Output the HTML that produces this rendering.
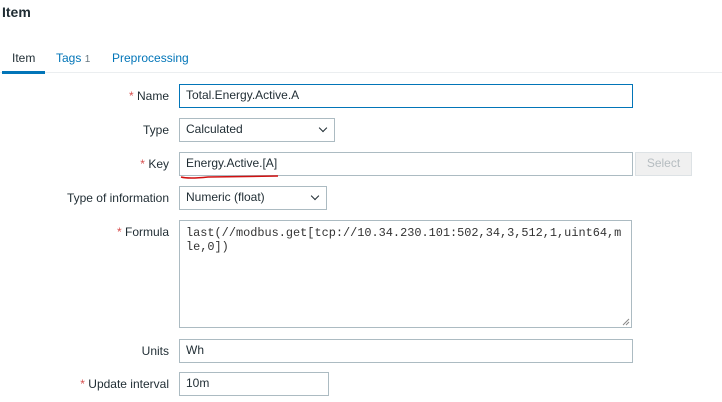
<!DOCTYPE html>
<html><head><meta charset="utf-8"><style>
body{margin:0;width:722px;height:402px;background:#fff;font-family:"Liberation Sans",Arial,sans-serif;font-size:12px;color:#1f2c33;position:relative;overflow:hidden}
.a{position:absolute}
.lbl{position:absolute;right:553px;text-align:right;white-space:nowrap;font-size:12px}
.req::before{content:"* ";color:#d64e4e}
.in{position:absolute;box-sizing:border-box;border:1px solid #acbbc2;background:#fff;padding:0 6px;line-height:21px;font-size:12px;white-space:nowrap}
.sel::after{content:"";position:absolute;right:8px;top:6px;width:5px;height:5px;border-right:1.5px solid #1f2c33;border-bottom:1.5px solid #1f2c33;transform:rotate(45deg)}
</style></head><body>
<div class="a" style="left:2px;top:4px;font-size:14px;font-weight:bold;color:#1f2c33">Item</div>
<div class="a" style="left:0;top:72px;width:722px;height:1px;background:#ebeef0"></div>
<div class="a" style="left:12px;top:51px;">Item</div>
<div class="a" style="left:2px;top:71px;width:43px;height:3px;background:#0275b8"></div>
<div class="a" style="left:56px;top:51px;color:#0275b8">Tags <span style="font-size:10px;color:#687780">1</span></div>
<div class="a" style="left:112px;top:51px;color:#0275b8">Preprocessing</div>

<div class="lbl req" style="top:89px">Name</div>
<div class="in" style="left:179px;top:84px;width:454px;height:24px;border-color:#0275b8">Total.Energy.Active.A</div>
<div class="lbl" style="top:123px">Type</div>
<div class="in sel" style="left:179px;top:118px;width:156px;height:24px">Calculated</div>
<div class="lbl req" style="top:157px">Key</div>
<div class="in" style="left:179px;top:152px;width:454px;height:24px">Energy.Active.[A]</div>
<svg class="a" style="left:178px;top:172px" width="104" height="8"><path d="M3 5 Q10 7 30 5 L100 4" stroke="#d01010" stroke-width="1.5" fill="none"/></svg>
<div class="in" style="left:635px;top:152px;width:57px;height:24px;background:#f0f0f0;border-color:#dde2e5;color:#b5bcc0;text-align:center;padding:0">Select</div>
<div class="lbl" style="top:191px">Type of information</div>
<div class="in sel" style="left:179px;top:186px;width:148px;height:24px">Numeric (float)</div>
<div class="lbl req" style="top:225px">Formula</div>
<div class="in" style="left:179px;top:220px;width:453px;height:108px;font-family:'Liberation Mono',monospace;font-size:11.9px;line-height:14px;padding:5px 6px;white-space:pre;color:#333">last(//modbus.get[tcp://10.34.230.101:502,34,3,512,1,uint64,m
le,0])</div>
<svg class="a" style="left:622px;top:318px" width="8" height="8"><path d="M1 7L7 1M4 7L7 4" stroke="#888" stroke-width="1"/></svg>
<div class="lbl" style="top:344px">Units</div>
<div class="in" style="left:179px;top:339px;width:454px;height:24px">Wh</div>
<div class="lbl req" style="top:377px">Update interval</div>
<div class="in" style="left:179px;top:372px;width:150px;height:24px">10m</div>
</body></html>
